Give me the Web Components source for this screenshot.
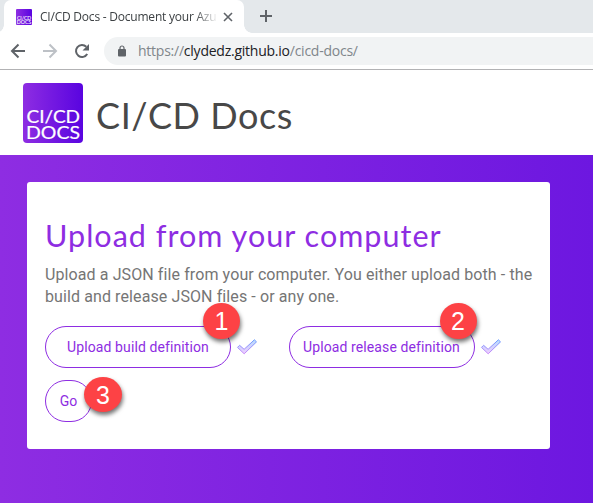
<!DOCTYPE html>
<html lang="en">
<head>
<meta charset="utf-8">
<title>CI/CD Docs</title>
<style>
body{margin:0;width:593px;height:503px;overflow:hidden;background:#fff;font-family:Roboto,"Liberation Sans",sans-serif}
</style>
</head>
<body>
<cicd-window></cicd-window>
<script>
const define=(name,html)=>{
  const t=document.createElement('template');
  t.innerHTML=html;
  customElements.define(name,class extends HTMLElement{
    constructor(){super();this.attachShadow({mode:'open'}).append(t.content.cloneNode(true));}
  });
};

define('docs-logo',`
<style>:host{display:block;width:60px;height:60px}svg{display:block;width:100%;height:100%}text{font-family:Lato,sans-serif;fill:#fff;stroke:#fff;stroke-width:.2}</style>
<svg viewBox="0 0 60 60"><defs><linearGradient id="g"><stop offset="0" stop-color="#8e2de2"/><stop offset="1" stop-color="#5904e0"/></linearGradient></defs>
<rect width="60" height="60" rx="4" fill="url(#g)"/>
<text x="3.500" y="40" font-size="18" textLength="53.500" lengthAdjust="spacingAndGlyphs">CI/CD</text>
<text x="3" y="56" font-size="18" textLength="54" lengthAdjust="spacingAndGlyphs">DOCS</text></svg>`);

define('browser-tab',`
<style>
:host{display:flex;align-items:center;box-sizing:border-box;width:240px;height:33px;padding-left:12px;background:#fff;border-radius:7px 7px 0 0;position:relative}
:host::before,:host::after{content:"";position:absolute;bottom:0;width:8px;height:8px}
:host::before{left:-8px;background:radial-gradient(circle at 0 0,transparent 7.5px,#fff 8px)}
:host::after{right:-8px;background:radial-gradient(circle at 100% 0,transparent 7.5px,#fff 8px)}
docs-logo{width:16px;height:16px;margin-right:8px;flex:none}
.t{width:176px;overflow:hidden;white-space:nowrap;font:12px/18px "Open Sans",sans-serif;letter-spacing:-.22px;color:#3c4043;-webkit-mask:linear-gradient(90deg,#000 155px,transparent 178px);mask:linear-gradient(90deg,#000 155px,transparent 178px)}
svg{margin-left:7px;flex:none}
</style>
<docs-logo></docs-logo><div class="t"><slot></slot></div>
<svg width="10" height="10" viewBox="0 0 10 10" stroke="#5f6368" stroke-width="1.6"><path d="M1 1l8 8M9 1L1 9"/></svg>`);

define('tab-strip',`
<style>:host{display:flex;align-items:center;height:33px;background:#e4e8eb;padding-left:4px}svg{margin:0 0 1px 16px}</style>
<slot></slot><svg width="12" height="12" viewBox="0 0 12 12" stroke="#5f6368" stroke-width="2"><path d="M6 0v12M0 6h12"/></svg>`);

define('address-bar',`
<style>
:host{display:flex;align-items:center;box-sizing:border-box;height:37px;border-bottom:1px solid #b2b2b4;background:#fff;padding-left:10px}
svg{display:block;flex:none}
.nav{display:flex;gap:16px;width:94px}
.url{display:flex;align-items:center;flex:1;height:28px;background:#f1f3f4;border-radius:14px 0 0 14px;padding-left:14px}
.text{font:14px/20px "Open Sans",sans-serif;letter-spacing:-.24px;color:#80868b;margin-left:12px;white-space:nowrap}
b{font-weight:400;color:#202124}
</style>
<div class="nav">
<svg width="16" height="16" viewBox="0 0 16 16" fill="none" stroke="#5f6368" stroke-width="2"><path d="M15 8H2.500M8.500 1.500L2 8l6.500 6.500"/></svg>
<svg width="16" height="16" viewBox="0 0 16 16" fill="none" stroke="#bdc1c6" stroke-width="2"><path d="M1 8h12.500M7.500 1.500L14 8l-6.500 6.500"/></svg>
<svg width="16" height="16" viewBox="0 0 16 16"><path d="M13.200 11A6 6 0 1 1 12.300 3.800" fill="none" stroke="#5f6368" stroke-width="2"/><path d="M15 1v6.500H8.500z" fill="#5f6368"/></svg>
</div>
<div class="url">
<svg width="8" height="12" viewBox="0 0 8 12"><rect y="4" width="8" height="7.500" rx="1" fill="#5f6368"/><path d="M2 4.500V3a2 2 0 0 1 4 0v1.500" fill="none" stroke="#5f6368" stroke-width="1.200"/></svg>
<div class="text">https://<b>clydedz.github.io</b>/cicd-docs/</div></div>`);

define('site-header',`
<style>:host{display:flex;box-sizing:border-box;height:85px;padding:13px 0 0 23px}
h1{margin:10px 0 0 13px;font:400 36px/44px Lato,sans-serif;letter-spacing:.6px;color:#484848;white-space:nowrap}</style>
<docs-logo></docs-logo><h1><slot></slot></h1>`);

define('outline-button',`
<style>:host{display:flex;align-items:center;justify-content:center;box-sizing:border-box;position:relative;width:186px;height:42px;border:1px solid #8e2de2;border-radius:21px;color:#8e2de2;font:14px/20px Roboto,sans-serif;letter-spacing:.1px;white-space:nowrap}</style>
<slot></slot><slot name="badge"></slot>`);

define('step-badge',`
<style>:host{display:flex;align-items:center;justify-content:center;position:absolute;right:-10px;top:-24px;width:37px;height:36px;border-radius:50%;background:#fd4245;box-shadow:1px 3px 4px rgba(0,0,0,.55);color:#fff;font:25px/36px "Liberation Sans",sans-serif;letter-spacing:0}</style>
<slot></slot>`);

define('done-check',`
<style>:host{display:block;width:22px;height:18px;margin-left:5px}svg{display:block}</style>
<svg width="22" height="18" viewBox="0 0 22 18"><defs><linearGradient id="f" x1="0" x2="0" y1="0" y2="1"><stop stop-color="#b5dcfd"/><stop offset="1" stop-color="#efccff"/></linearGradient><linearGradient id="s" x1="0" x2="0" y1="0" y2="1"><stop stop-color="#699bff"/><stop offset="1" stop-color="#cb88f8"/></linearGradient></defs>
<path d="M1.500 9.400l2.100-2.100 4.500 4L18.400 1.800l2.100 2.100L8.200 15.800z" fill="url(#f)" stroke="url(#s)" stroke-width="1" stroke-linejoin="round"/></svg>`);

define('upload-card',`
<style>
:host{display:block;box-sizing:border-box;width:523px;height:267px;background:#fff;border-radius:3px;padding:34px 18px 0}
h2{margin:0;font:400 30.5px/38px Lato,sans-serif;letter-spacing:1.03px;color:#8e2de2;white-space:nowrap}
p{margin:10px 0 0;font:16px/22px Roboto,sans-serif;letter-spacing:.1px;color:#757575;white-space:nowrap}
.row{display:flex;align-items:center;height:42px;margin-top:18px}
.item{display:flex;align-items:center;width:244px}
.item+.item step-badge{right:-3px}
.row+.row{margin-top:12px}
.go{width:47px}
.go step-badge{right:-31px;top:-4px;width:38px;height:35px}
</style>
<h2>Upload from your computer</h2>
<p>Upload a JSON file from your computer. You either upload both - the<br>build and release JSON files - or any one.</p>
<div class="row">
<div class="item"><outline-button>Upload build definition<step-badge slot="badge">1</step-badge></outline-button><done-check></done-check></div>
<div class="item"><outline-button>Upload release definition<step-badge slot="badge">2</step-badge></outline-button><done-check></done-check></div>
</div>
<div class="row"><outline-button class="go">Go<step-badge slot="badge">3</step-badge></outline-button></div>`);

define('gradient-area',`
<style>:host{display:block;box-sizing:border-box;height:348px;padding:27px;background:linear-gradient(90deg,#8e2de2,#6d17e0)}</style><slot></slot>`);

define('cicd-window',`
<style>:host{display:block}</style>
<tab-strip><browser-tab>CI/CD Docs - Document your Azure</browser-tab></tab-strip>
<address-bar></address-bar>
<site-header>CI/CD Docs</site-header>
<gradient-area><upload-card></upload-card></gradient-area>`);
</script>
</body>
</html>
